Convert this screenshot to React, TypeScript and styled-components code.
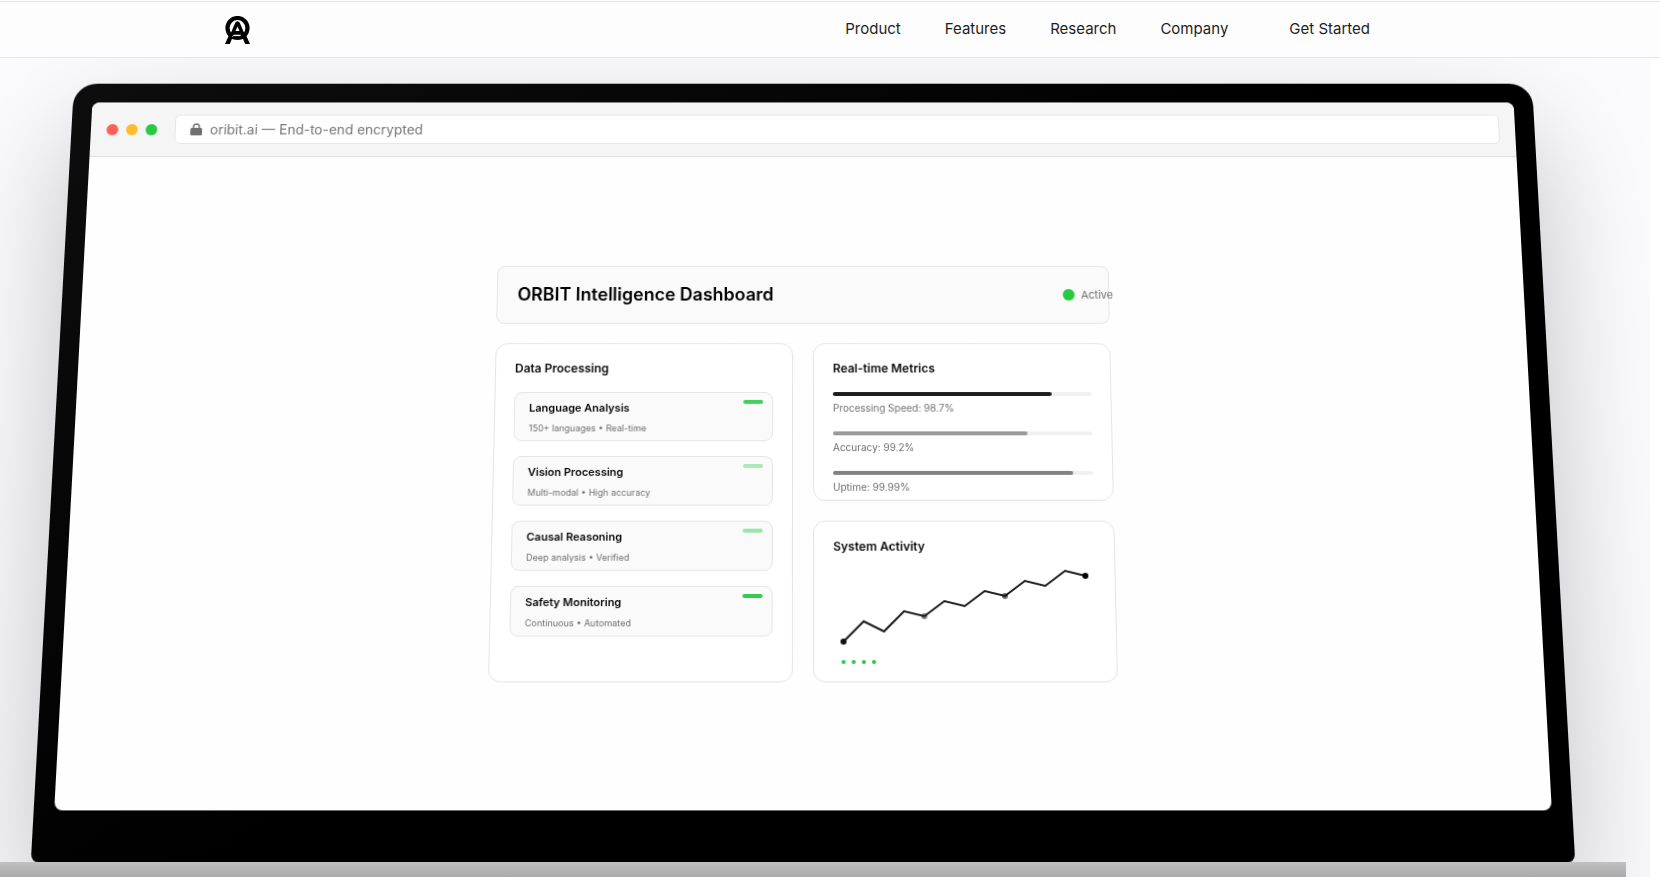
import React from "react";
import styled, { createGlobalStyle } from "styled-components";

const GlobalStyle = createGlobalStyle`
  *, *::before, *::after { box-sizing: border-box; }
  body {
    margin: 0;
    background: #ffffff;
    color: #1d1d1f;
    font-family: Inter, "Liberation Sans", sans-serif;
    overflow: hidden;
  }
  h1, h2, h3, p, ul { margin: 0; padding: 0; }
  ul { list-style: none; }
`;

const Page = styled.div`
  padding-top: 1px;
  overflow: hidden;
  height: 100vh;
`;

/* Top navigation */

const Header = styled.header`
  position: relative;
  z-index: 2;
  height: 57px;
  border-top: 1px solid #e9dfea;
  border-bottom: 1px solid #e6e6e6;
  background: #fdfdfd;
`;

const HeaderInner = styled.div`
  display: flex;
  align-items: center;
  justify-content: space-between;
  width: calc(100% - 10px);
  height: 100%;
  margin-right: 10px;
  padding: 0 calc(50% - 550px) 0 calc(50% - 605px);
`;

const HomeLink = styled.a`
  display: block;
  height: 28px;
`;

const NavLinks = styled.nav`
  display: flex;
  align-items: center;
  gap: 44px;
  padding-bottom: 2px;
`;

const NavLink = styled.a<{ $spaced?: boolean }>`
  margin-left: ${(p) => (p.$spaced ? "17px" : "0")};
  font-size: 15px;
  line-height: 20px;
  color: #1d1d1f;
  text-decoration: none;
`;

/* Laptop */

const Hero = styled.main`
  display: flex;
  flex-direction: column;
  align-items: center;
  margin-right: 10px;
  padding: 11px 44px 0 0;
  background: #fbfbfd;
  overflow: hidden;
`;

const Lid = styled.section`
  position: relative;
  width: 94%;
  max-width: 1500px;
  margin-bottom: 7px;
  padding: 20px 20px 50px;
  border-radius: 24px 24px 8px 8px;
  background: linear-gradient(145deg, #0d0d0d 0%, #000000 50%);
  box-shadow: 0 50px 120px rgba(0, 0, 0, 0.23);
  transform: perspective(1900px) rotateX(8deg);
`;

const Screen = styled.div`
  border-radius: 8px;
  background: #fefefe;
  overflow: hidden;
`;

const Base = styled.div`
  position: relative;
  z-index: 1;
  align-self: stretch;
  flex: none;
  height: 24px;
  margin: 0 -20px;
  background: linear-gradient(#c0c0c0, #9e9e9e);
`;

/* Browser window */

const Chrome = styled.div`
  display: flex;
  align-items: center;
  gap: 18px;
  height: 58px;
  padding: 0 16px;
  border-bottom: 1px solid #dddddd;
  background: #f5f5f5;
`;

const Lights = styled.div`
  display: flex;
  gap: 8px;
`;

const Light = styled.span<{ $color: string }>`
  width: 12px;
  height: 12px;
  border-radius: 50%;
  background: ${(p) => p.$color};
`;

const AddressBar = styled.label`
  display: flex;
  flex: 1;
  align-items: center;
  gap: 8px;
  height: 31px;
  padding: 0 15px;
  border: 1px solid #e6e6e6;
  border-radius: 6px;
  background: #ffffff;
`;

const AddressInput = styled.input`
  flex: 1;
  min-width: 0;
  padding: 0;
  border: 0;
  outline: 0;
  background: transparent;
  font-family: inherit;
  font-size: 14px;
  line-height: 20px;
  color: #75757a;
`;

const Viewport = styled.div`
  display: flex;
  justify-content: center;
  padding: 74px 0 84px;
`;

/* Dashboard */

const Canvas = styled.div`
  width: 700px;
  padding: 40px;
  background:
    repeating-linear-gradient(90deg, #fdfdfd 0 1px, transparent 1px 40px),
    repeating-linear-gradient(#fdfdfd 0 1px, transparent 1px 40px);
`;

const Dashboard = styled.div`
  display: grid;
  grid-template-columns: 1fr 1fr;
  grid-template-rows: 60px 160px 160px;
  gap: 20px;
`;

const Banner = styled.div`
  grid-column: 1 / -1;
  display: flex;
  align-items: center;
  justify-content: space-between;
  padding: 0 20px;
  border: 1px solid #e5e5e5;
  border-radius: 8px;
  background: #fafafa;
`;

const BannerTitle = styled.h1`
  font-size: 18px;
  font-weight: 600;
  line-height: 24px;
  color: #000000;
`;

const Status = styled.p`
  display: flex;
  align-items: center;
  gap: 6px;
  margin-right: -25px;
  font-size: 11px;
  line-height: 16px;
  color: #6e6e73;
`;

const Card = styled.section<{ $tall?: boolean }>`
  grid-row: ${(p) => (p.$tall ? "span 2" : "auto")};
  padding: 15px 19px 0;
  border: 1px solid #e5e5e5;
  border-radius: 12px;
  background: #ffffff;
`;

const CardTitle = styled.h2`
  margin-bottom: 14px;
  font-size: 12px;
  font-weight: 600;
  line-height: 20px;
  color: #0a0a0a;
`;

const TaskList = styled.ul`
  display: grid;
  gap: 15px;
`;

const Task = styled.li`
  display: flex;
  align-items: flex-start;
  justify-content: space-between;
  height: 50px;
  padding: 7px 9px 0 14px;
  border: 1px solid #e5e5e5;
  border-radius: 8px;
  background: #fafafa;
`;

const TaskName = styled.h3`
  margin-bottom: 5px;
  font-size: 11px;
  font-weight: 600;
  line-height: 16px;
  color: #0a0a0a;
`;

const TaskNote = styled.p`
  font-size: 9px;
  line-height: 16px;
  color: #6e6e73;
`;

const TaskState = styled.span<{ $strength: number }>`
  width: 20px;
  height: 4px;
  border-radius: 2px;
  background: #28ca42;
  opacity: ${(p) => p.$strength};
`;

const Metrics = styled.ul`
  display: grid;
  gap: 16px;
`;

const Track = styled.div`
  height: 4px;
  margin-bottom: 4px;
  border-radius: 2px;
  background: #f0f0f0;
`;

const Fill = styled.div<{ $color: string }>`
  height: 4px;
  border-radius: 2px;
  background: ${(p) => p.$color};
`;

const MetricLabel = styled.p`
  font-size: 10px;
  line-height: 16px;
  color: #6e6e73;
`;

const Chart = styled.svg`
  display: block;
`;

const tasks = [
  { name: "Language Analysis", note: "150+ languages • Real-time", strength: 0.88 },
  { name: "Vision Processing", note: "Multi-modal • High accuracy", strength: 0.36 },
  { name: "Causal Reasoning", note: "Deep analysis • Verified", strength: 0.45 },
  { name: "Safety Monitoring", note: "Continuous • Automated", strength: 0.95 },
];

const metrics = [
  { label: "Processing Speed: 98.7%", width: 220, color: "#1d1d1f" },
  { label: "Accuracy: 99.2%", width: 195, color: "#999999" },
  { label: "Uptime: 99.99%", width: 240, color: "#828284" },
];

const Logo = () => (
  <svg width="26" height="28" viewBox="0 0 26 28" aria-hidden="true">
    <circle cx="12.500" cy="12" r="10" fill="none" stroke="#000" strokeWidth="4.200" />
    <path d="M0 28 L4.500 18 H9 L4.800 28 Z" fill="#000" />
    <path d="M25 28 L20.500 18 L15.500 17 L20.200 28 Z" fill="#000" />
    <path d="M5.500 18 L10.200 6.800 Q12.500 3.600 14.800 6.800 L19.500 18 L15.500 18.800 H9.500 Z" fill="#000" />
    <path d="M12.500 10.600 L14.500 15 H10.500 Z" fill="#fdfdfd" />
    <path d="M7.500 20.600 L8.200 19.600 H15.500" fill="none" stroke="#fdfdfd" strokeWidth="1" />
  </svg>
);

const Lock = () => (
  <svg width="12" height="14" viewBox="0 0 12 14" aria-hidden="true">
    <path d="M3 6 V4 A3 3 0 0 1 9 4 V6" fill="none" stroke="#6e6e73" strokeWidth="1.400" />
    <rect x="0" y="5" width="12" height="8" rx="1.500" fill="#6e6e73" />
  </svg>
);

export default function App() {
  return (
    <>
      <GlobalStyle />
      <Page>
        <Header>
          <HeaderInner>
            <HomeLink href="#" aria-label="Home">
              <Logo />
            </HomeLink>
            <NavLinks>
              <NavLink href="#product">Product</NavLink>
              <NavLink href="#features">Features</NavLink>
              <NavLink href="#research">Research</NavLink>
              <NavLink href="#company">Company</NavLink>
              <NavLink href="#start" $spaced>
                Get Started
              </NavLink>
            </NavLinks>
          </HeaderInner>
        </Header>
        <Hero>
          <Lid>
            <Screen>
              <Chrome>
                <Lights>
                  <Light $color="#ff5f57" />
                  <Light $color="#ffbd2e" />
                  <Light $color="#28ca42" />
                </Lights>
                <AddressBar>
                  <Lock />
                  <AddressInput
                    type="text"
                    aria-label="Address"
                    readOnly
                    value="oribit.ai — End-to-end encrypted"
                  />
                </AddressBar>
              </Chrome>
              <Viewport>
                <Canvas>
                  <Dashboard>
                    <Banner>
                      <BannerTitle>ORBIT Intelligence Dashboard</BannerTitle>
                      <Status>
                        <Light $color="#28ca42" />
                        Active
                      </Status>
                    </Banner>
                    <Card $tall>
                      <CardTitle>Data Processing</CardTitle>
                      <TaskList>
                        {tasks.map((t) => (
                          <Task key={t.name}>
                            <div>
                              <TaskName>{t.name}</TaskName>
                              <TaskNote>{t.note}</TaskNote>
                            </div>
                            <TaskState $strength={t.strength} />
                          </Task>
                        ))}
                      </TaskList>
                    </Card>
                    <Card>
                      <CardTitle>Real-time Metrics</CardTitle>
                      <Metrics>
                        {metrics.map((m) => (
                          <li key={m.label}>
                            <Track>
                              <Fill $color={m.color} style={{ width: m.width }} />
                            </Track>
                            <MetricLabel>{m.label}</MetricLabel>
                          </li>
                        ))}
                      </Metrics>
                    </Card>
                    <Card>
                      <CardTitle>System Activity</CardTitle>
                      <Chart width="260" height="100" viewBox="20 50 260 100" overflow="visible" role="img" aria-label="System activity over time">
                        <polyline
                          points="30,120 50,100 70,110 90,90 110,95 130,80 150,85 170,70 190,75 210,60 230,65 250,50 270,55"
                          fill="none"
                          stroke="#1d1d1f"
                          strokeWidth="2"
                        />
                        <circle cx="30" cy="120" r="3" fill="#111" />
                        <circle cx="110" cy="95" r="3" fill="#111" opacity="0.5" />
                        <circle cx="190" cy="75" r="3" fill="#111" opacity="0.6" />
                        <circle cx="270" cy="55" r="3" fill="#000" />
                        <g fill="#28ca42">
                          <circle cx="30" cy="140" r="2" />
                          <circle cx="40" cy="140" r="2" />
                          <circle cx="50" cy="140" r="2" />
                          <circle cx="60" cy="140" r="2" />
                        </g>
                      </Chart>
                    </Card>
                  </Dashboard>
                </Canvas>
              </Viewport>
            </Screen>
          </Lid>
          <Base />
        </Hero>
      </Page>
    </>
  );
}
